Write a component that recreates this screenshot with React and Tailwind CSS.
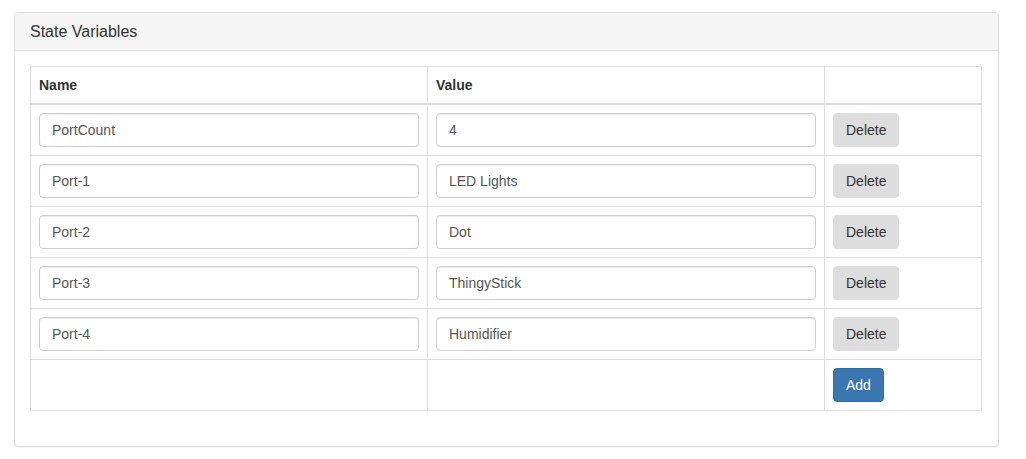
import React, { useState } from "react";

const initialVars = [
  { name: "PortCount", value: "4" },
  { name: "Port-1", value: "LED Lights" },
  { name: "Port-2", value: "Dot" },
  { name: "Port-3", value: "ThingyStick" },
  { name: "Port-4", value: "Humidifier" },
];

const App = () => {
  const [vars, setVars] = useState(initialVars);

  const update = (i, key, val) => {
    setVars(vars.map((v, idx) => (idx === i ? { ...v, [key]: val } : v)));
  };

  const inputClass =
    "block w-full h-[34px] px-3 text-sm text-[#555] bg-white border border-[#ccc] rounded-[4px] shadow-[inset_0_1px_1px_rgba(0,0,0,0.075)] outline-none";

  return (
    <div
      className="min-h-screen bg-white text-[#333] text-sm"
      style={{ fontFamily: "'Liberation Sans', Arial, sans-serif" }}
    >
      <div className="ml-[14px] pt-[12px] w-[985px]">
        <div className="border border-[#ddd] rounded-[4px] bg-white shadow-[0_1px_1px_rgba(0,0,0,0.05)]">
          <div className="bg-[#f5f5f5] border-b border-[#ddd] rounded-t-[3px] px-[15px] py-[10px]">
            <h3 className="text-base leading-[17px] text-[#333]">State Variables</h3>
          </div>
          <div className="p-[15px]">
            <table className="w-[952px] border-collapse border border-[#ddd] mb-5">
              <colgroup>
                <col className="w-[397px]" />
                <col className="w-[397px]" />
                <col />
              </colgroup>
              <thead>
                <tr>
                  <th className="text-left font-bold p-2 leading-5 border border-[#ddd] border-b-2">Name</th>
                  <th className="text-left font-bold p-2 leading-5 border border-[#ddd] border-b-2">Value</th>
                  <th className="p-2 border border-[#ddd] border-b-2"></th>
                </tr>
              </thead>
              <tbody>
                {vars.map((v, i) => (
                  <tr key={i}>
                    <td className="p-2 border border-[#ddd]">
                      <input
                        className={inputClass}
                        value={v.name}
                        onChange={(e) => update(i, "name", e.target.value)}
                      />
                    </td>
                    <td className="p-2 border border-[#ddd]">
                      <input
                        className={inputClass}
                        value={v.value}
                        onChange={(e) => update(i, "value", e.target.value)}
                      />
                    </td>
                    <td className="p-2 border border-[#ddd]">
                      <button
                        className="h-[34px] px-3 text-sm text-[#333] bg-[#ddd] border border-[#ddd] rounded-[4px]"
                        onClick={() => setVars(vars.filter((_, idx) => idx !== i))}
                      >
                        Delete
                      </button>
                    </td>
                  </tr>
                ))}
                <tr>
                  <td className="p-2 h-[51px] border border-[#ddd]"></td>
                  <td className="p-2 border border-[#ddd]"></td>
                  <td className="p-2 border border-[#ddd]">
                    <button
                      className="h-[34px] px-3 text-sm text-white bg-[#3a77b0] border border-[#2e6da4] rounded-[4px]"
                      onClick={() => setVars([...vars, { name: "", value: "" }])}
                    >
                      Add
                    </button>
                  </td>
                </tr>
              </tbody>
            </table>
          </div>
        </div>
      </div>
    </div>
  );
};

export default App;
